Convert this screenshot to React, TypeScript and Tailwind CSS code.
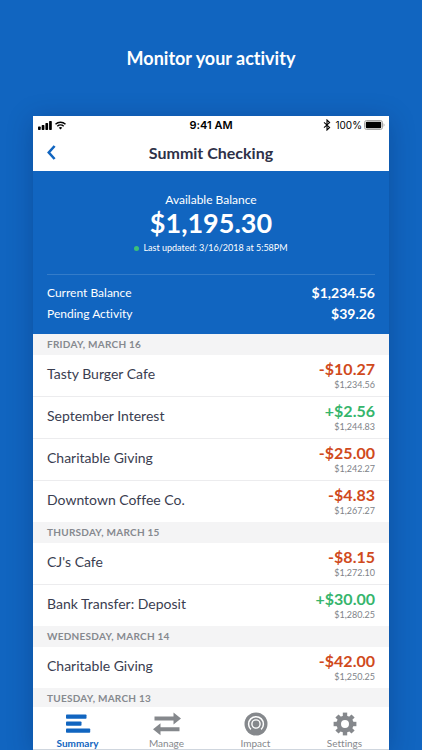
import React, { useState } from 'react';
import { clsx } from 'clsx';

interface Transaction {
  name: string;
  amount: string;
  balance: string;
}

interface Day {
  label: string;
  items: Transaction[];
}

const days: Day[] = [
  {
    label: 'Friday, March 16',
    items: [
      { name: 'Tasty Burger Cafe', amount: '-$10.27', balance: '$1,234.56' },
      { name: 'September Interest', amount: '+$2.56', balance: '$1,244.83' },
      { name: 'Charitable Giving', amount: '-$25.00', balance: '$1,242.27' },
      { name: 'Downtown Coffee Co.', amount: '-$4.83', balance: '$1,267.27' },
    ],
  },
  {
    label: 'Thursday, March 15',
    items: [
      { name: "CJ's Cafe", amount: '-$8.15', balance: '$1,272.10' },
      { name: 'Bank Transfer: Deposit', amount: '+$30.00', balance: '$1,280.25' },
    ],
  },
  {
    label: 'Wednesday, March 14',
    items: [{ name: 'Charitable Giving', amount: '-$42.00', balance: '$1,250.25' }],
  },
  { label: 'Tuesday, March 13', items: [] },
];

function SummaryIcon() {
  return (
    <svg width="26" height="20" viewBox="0 0 26 20" fill="currentColor">
      <rect x="1" y="0.4" width="20.5" height="4.4" rx="0.8" />
      <rect x="1" y="7.4" width="15.5" height="4.4" rx="0.8" />
      <rect x="1" y="14.4" width="24.2" height="4.4" rx="0.8" />
    </svg>
  );
}

function ManageIcon() {
  return (
    <svg width="28" height="24" viewBox="0 0 28 24" fill="currentColor">
      <path d="M1.5 4.6h19V0.6L28 6.6l-7.5 6v-4h-19z" />
      <path d="M26.5 15.2h-19v-4L0 17.2l7.5 6v-4h19z" />
    </svg>
  );
}

function ImpactIcon() {
  return (
    <svg width="24" height="24" viewBox="0 0 24 24" fill="none">
      <circle cx="12" cy="12" r="11.5" fill="currentColor" />
      <path d="M6.9 17.4A7.4 7.4 0 1 1 17.1 17.4" stroke="white" strokeWidth="1.5" />
      <circle cx="12" cy="12" r="4.1" stroke="white" strokeWidth="1.4" />
    </svg>
  );
}

function SettingsIcon() {
  return (
    <svg width="24" height="24" viewBox="0 0 24 24" fill="none">
      <circle cx="12" cy="12" r="6.3" stroke="currentColor" strokeWidth="4.6" />
      <g fill="currentColor">
        {[0, 45, 90, 135, 180, 225, 270, 315].map((angle) => (
          <path key={angle} d="M9.8 4.8V0.6h4.4v4.2z" transform={`rotate(${angle} 12 12)`} />
        ))}
      </g>
    </svg>
  );
}

const tabs = [
  { label: 'Summary', Icon: SummaryIcon },
  { label: 'Manage', Icon: ManageIcon },
  { label: 'Impact', Icon: ImpactIcon },
  { label: 'Settings', Icon: SettingsIcon },
];

function StatusBar() {
  return (
    <div className="grid h-[18px] grid-cols-3 items-center px-1 font-['Inter',sans-serif] text-black">
      <div className="flex items-center gap-[3px] pl-px">
        <svg width="14" height="9" viewBox="0 0 14 9" fill="currentColor">
          <rect x="0" y="5.6" width="2.7" height="3.4" rx="0.7" />
          <rect x="3.7" y="4" width="2.7" height="5" rx="0.7" />
          <rect x="7.4" y="2" width="2.7" height="7" rx="0.7" />
          <rect x="11.1" y="0" width="2.7" height="9" rx="0.7" />
        </svg>
        <svg width="11" height="9" viewBox="0 0 11 9" fill="none" stroke="currentColor" strokeWidth="1.4">
          <path d="M0.5 3.2a7.2 7.2 0 0 1 10 0" />
          <path d="M2.3 5.2a4.6 4.6 0 0 1 6.4 0" />
          <path d="M5.5 8.6 3.8 6.8a2.5 2.5 0 0 1 3.4 0z" fill="currentColor" stroke="none" />
        </svg>
      </div>
      <span className="text-center text-[11px] font-semibold">9:41 AM</span>
      <div className="flex items-center justify-end">
        <svg className="mr-1" width="8" height="12" viewBox="0 0 8 12" fill="none" stroke="currentColor" strokeWidth="1.1">
          <path d="M1 3.3 6.6 8.4 4 11V1l2.6 2.6L1 8.7" />
        </svg>
        <span className="mr-[2px] text-[10px]">100%</span>
        <svg width="21" height="10" viewBox="0 0 21 10">
          <rect x="0.5" y="0.5" width="18" height="9" rx="2.2" fill="none" stroke="#a3a3a3" />
          <rect x="1.8" y="1.8" width="15.4" height="6.4" rx="1" fill="black" />
          <path d="M19.6 3.3v3.4c1.2-.6 1.2-2.8 0-3.4z" fill="#a3a3a3" />
        </svg>
      </div>
    </div>
  );
}

function TransactionRow({ name, amount, balance }: Transaction) {
  return (
    <li className="flex h-[42px] items-center justify-between px-[14px] last:h-[41px]">
      <span className="pb-1 text-sm text-[#3a3d50]">{name}</span>
      <div className="flex flex-col items-end">
        <span
          className={clsx(
            'text-base leading-[18px] font-bold',
            amount.startsWith('+') ? 'text-[#36b56c]' : 'text-[#d04a1c]'
          )}
        >
          {amount}
        </span>
        <span className="text-[9px] leading-[14px] text-[#808389]">{balance}</span>
      </div>
    </li>
  );
}

export default function App() {
  const [activeTab, setActiveTab] = useState('Summary');

  return (
    <div className="flex h-screen flex-col bg-[#1165c0] font-['Lato',sans-serif] [font-variant-ligatures:none]">
      <h1 className="pt-11 pb-11 text-center text-lg leading-7 font-bold text-white">Monitor your activity</h1>

      <main className="mx-[33px] flex min-h-0 flex-1 flex-col bg-white shadow-[0_4px_24px_rgba(0,20,60,0.25)]">
        <StatusBar />

        <header className="grid h-[37px] grid-cols-[40px_1fr_40px] items-center">
          <button aria-label="Back" className="flex h-full items-center pl-[14px] text-[#1165c0]">
            <svg width="9" height="15" viewBox="0 0 9 15" fill="none" stroke="currentColor" strokeWidth="2.6">
              <path d="M7.6 1 1.8 7.5 7.6 14" />
            </svg>
          </button>
          <h2 className="text-center text-base font-bold text-[#2e3148]">Summit Checking</h2>
        </header>

        <section className="h-[163px] shrink-0 bg-[#1165c0] px-[14px] pt-[21px] text-white">
          <div className="flex flex-col items-center">
            <p className="text-xs leading-4">Available Balance</p>
            <p className="text-[27px] leading-[30px] font-bold">$1,195.30</p>
            <p className="mt-[2px] flex items-center gap-1 text-[9px] leading-4">
              <span className="size-[5px] rounded-full bg-[#3cc078]" />
              Last updated: 3/16/2018 at 5:58PM
            </p>
          </div>
          <dl className="mt-[18px] border-t border-white/15 pt-[7px]">
            <div className="flex h-[21px] items-center justify-between">
              <dt className="text-xs">Current Balance</dt>
              <dd className="text-sm font-bold">$1,234.56</dd>
            </div>
            <div className="flex h-[21px] items-center justify-between">
              <dt className="text-xs">Pending Activity</dt>
              <dd className="text-sm font-bold">$39.26</dd>
            </div>
          </dl>
        </section>

        <div className="min-h-0 flex-1 overflow-hidden">
          {days.map((day) => (
            <section key={day.label}>
              <h3 className="h-[21px] bg-[#f4f4f5] px-[14px] text-[10px] leading-[21px] font-bold tracking-wide text-[#86898f] uppercase">
                {day.label}
              </h3>
              <ul className="divide-y divide-[#ececee]">
                {day.items.map((item) => (
                  <TransactionRow key={item.name} {...item} />
                ))}
              </ul>
            </section>
          ))}
        </div>

        <nav className="grid h-[43px] shrink-0 grid-cols-4 border-b border-[#cfd6de]">
          {tabs.map(({ label, Icon }) => (
            <button
              key={label}
              onClick={() => setActiveTab(label)}
              className={clsx(
                'flex flex-col items-center pt-[5px] text-[10px]',
                activeTab === label ? 'font-bold text-[#1165c0]' : 'text-[#85888c]'
              )}
            >
              <span className="flex h-6 items-center">
                <Icon />
              </span>
              <span className="leading-[14px]">{label}</span>
            </button>
          ))}
        </nav>
      </main>
    </div>
  );
}
